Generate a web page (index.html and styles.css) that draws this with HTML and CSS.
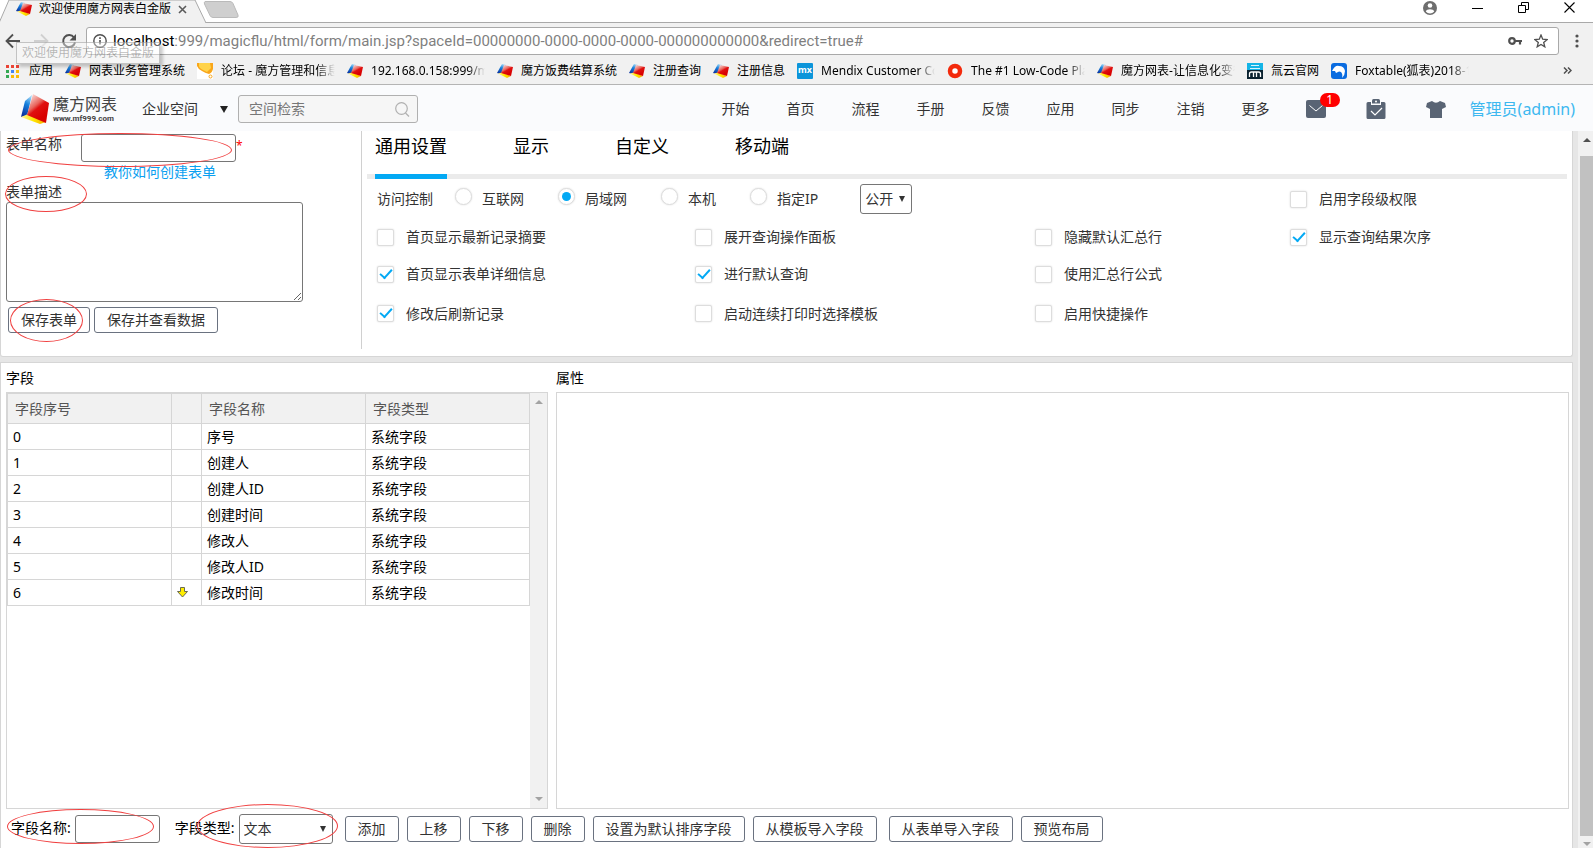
FILE: index.html
```html
<!DOCTYPE html>
<html lang="zh-CN">
<head>
    <meta charset="UTF-8">
    <meta name="viewport" content="width=device-width, initial-scale=1.0">
    <title>欢迎使用魔方网表白金版</title>
    <link rel="stylesheet" href="styles.css">
</head>
<body>

    <!-- logo 图形 -->
    <svg class="defs" width="0" height="0" aria-hidden="true">
        <defs>
            <linearGradient id="g-red" x1="0.2" y1="0" x2="0.7" y2="0.8">
                <stop offset="0" stop-color="#fbe3e0"/>
                <stop offset="0.45" stop-color="#e8645c"/>
                <stop offset="0.6" stop-color="#e01010"/>
                <stop offset="1" stop-color="#d80000"/>
            </linearGradient>
            <linearGradient id="g-blue" x1="0.6" y1="0" x2="0.3" y2="1">
                <stop offset="0" stop-color="#9fd4f5"/>
                <stop offset="0.4" stop-color="#1580dc"/>
                <stop offset="1" stop-color="#0a2c9c"/>
            </linearGradient>
            <linearGradient id="g-yellow" x1="0" y1="0" x2="1" y2="0">
                <stop offset="0" stop-color="#fff3a0"/>
                <stop offset="0.5" stop-color="#ffe800"/>
                <stop offset="1" stop-color="#f7a600"/>
            </linearGradient>
            <symbol id="cube" viewBox="0 0 30 30">
                <path d="M12 1 7 22 1 23 5 7z" fill="url(#g-blue)"/>
                <path d="M1 23 8 20 26 28 20 30z" fill="url(#g-yellow)"/>
                <path d="M13 0 29 9 26 29 7 21z" fill="url(#g-red)"/>
            </symbol>
            <symbol id="cube-flat" viewBox="0 0 16 14">
                <path d="M5 0 9 1 4 10 0 9z" fill="url(#g-blue)"/>
                <path d="M1 9.500 5 8.500 14 12 10 14z" fill="url(#g-yellow)"/>
                <path d="M7 1 16 3 14 12 4 9z" fill="url(#g-red)"/>
            </symbol>
        </defs>
    </svg>

    <!-- 浏览器 -->
    <div class="browser">
        <div class="tab-strip">
            <svg class="tab-shape" width="240" height="24" viewBox="0 0 240 24">
                <path d="M-1 23 9 0H195L206 23" fill="#f1f1f1" stroke="#a9a9a9"/>
                <path d="M205 1.500H230Q232 1.500 233 3.500L238 15Q239 17.500 236 17.500H213Q211 17.500 210 15.500L204.500 4Q204 1.500 205 1.500z" fill="#cfcfcf" stroke="#bababa"/>
            </svg>
            <div class="tab">
                <svg width="16" height="14"><use href="#cube-flat"/></svg>
                <span class="tab-title">欢迎使用魔方网表白金版</span>
                <button class="icon-btn" aria-label="关闭标签">
                    <svg width="9" height="9" viewBox="0 0 9 9"><path d="M1 1l7 7M8 1L1 8" stroke="#5a5a5a" stroke-width="1.600"/></svg>
                </button>
            </div>
            <div class="window-btns">
                <button class="icon-btn" aria-label="用户">
                    <svg width="14" height="14" viewBox="0 0 14 14"><circle cx="7" cy="7" r="7" fill="#6e6e6e"/><circle cx="7" cy="4.500" r="2.300" fill="#fff"/><path d="M2.800 10.500C3.500 7.500 10.500 7.500 11.200 10.500 9 13 5 13 2.800 10.500z" fill="#fff"/></svg>
                </button>
                <button class="icon-btn" aria-label="最小化">
                    <svg width="11" height="11" viewBox="0 0 11 11"><path d="M0 6.500h11" stroke="#000"/></svg>
                </button>
                <button class="icon-btn" aria-label="还原">
                    <svg width="11" height="11" viewBox="0 0 11 11" fill="none" stroke="#000"><path d="M.5 3.500h7v7h-7zM3.500 3.500v-3h7v7h-3"/></svg>
                </button>
                <button class="icon-btn" aria-label="关闭">
                    <svg width="11" height="11" viewBox="0 0 11 11"><path d="M.5.5l10 10M10.500.5l-10 10" stroke="#000" stroke-width="1.100"/></svg>
                </button>
            </div>
        </div>

        <div class="toolbar">
            <button class="icon-btn" aria-label="后退">
                <svg width="16" height="16" viewBox="0 0 16 16" fill="none" stroke="#505050" stroke-width="1.800"><path d="M15 8H2M8 1.500 1.500 8 8 14.500"/></svg>
            </button>
            <button class="icon-btn" aria-label="前进">
                <svg width="16" height="16" viewBox="0 0 16 16" fill="none" stroke="#d0d0d0" stroke-width="1.800"><path d="M1 8h13M8 1.500 14.500 8 8 14.500"/></svg>
            </button>
            <button class="icon-btn" aria-label="刷新">
                <svg width="16" height="16" viewBox="0 0 16 16"><path d="M13 4.500A6 6 0 1 0 14 9.500" fill="none" stroke="#505050" stroke-width="2"/><path d="M15 1v6.500H8.500z" fill="#505050"/></svg>
            </button>
            <div class="address">
                <svg width="14" height="14" viewBox="0 0 14 14"><circle cx="7" cy="7" r="6.200" fill="none" stroke="#505050" stroke-width="1.400"/><path d="M7 6v4.500M7 3.300v1.600" stroke="#505050" stroke-width="1.600"/></svg>
                <label class="address-host" for="url">localhost</label>
                <input class="address-path" id="url" type="text" value=":999/magicflu/html/form/main.jsp?spaceId=00000000-0000-0000-0000-000000000000&amp;redirect=true#">
                <svg width="14" height="10" viewBox="0 0 14 10"><circle cx="4" cy="5" r="2.800" fill="none" stroke="#505050" stroke-width="2.200"/><path d="M7 5h7M12 5v3.500" stroke="#505050" stroke-width="2.200"/></svg>
                <svg width="14" height="14" viewBox="0 0 14 14"><path d="M7 1l1.700 4.200 4.500.3-3.500 2.900 1.100 4.400L7 10.400l-3.800 2.400 1.100-4.400L.8 5.500l4.500-.3z" fill="none" stroke="#505050" stroke-width="1.300"/></svg>
            </div>
            <button class="icon-btn" aria-label="菜单">
                <svg width="4" height="14" viewBox="0 0 4 14" fill="#505050"><circle cx="2" cy="2" r="1.600"/><circle cx="2" cy="7" r="1.600"/><circle cx="2" cy="12" r="1.600"/></svg>
            </button>
            <div class="tooltip">欢迎使用魔方网表白金版</div>
        </div>

        <nav class="bookmarks">
            <a class="bookmark" href="#">
                <svg width="16" height="16" viewBox="0 0 16 16"><path d="M1 2h3v3h-3zM6 2h3v3h-3zM11 2h3v3h-3z" fill="#ea4335"/><path d="M1 7h3v3h-3z" fill="#34a853"/><path d="M6 7h3v3h-3z" fill="#4285f4"/><path d="M11 7h3v3h-3zM11 12h3v3h-3zM6 12h3v3h-3z" fill="#fbbc05"/><path d="M1 12h3v3h-3z" fill="#34a853"/></svg>
                <span>应用</span>
            </a>
            <a class="bookmark" href="#"><svg width="16" height="14"><use href="#cube-flat"/></svg><span>网表业务管理系统</span></a>
            <a class="bookmark" href="#">
                <svg width="16" height="16" viewBox="0 0 16 16"><path d="M0 0h16v16H0z" fill="#fff"/><path d="M0 0h16v6q-1 4-4 5-4-1-7-3Q1 6 0 3z" fill="#f9a61a"/><path d="M2 0h11l1 5-4 4-4-2q-4-2-4-4z" fill="#ffd34a"/><circle cx="13.500" cy="13.500" r="1.500" fill="none" stroke="#f9a61a"/></svg>
                <span class="fade">论坛 - 魔方管理和信息化</span>
            </a>
            <a class="bookmark" href="#"><svg width="16" height="14"><use href="#cube-flat"/></svg><span class="fade">192.168.0.158:999/magicflu</span></a>
            <a class="bookmark" href="#"><svg width="16" height="14"><use href="#cube-flat"/></svg><span>魔方饭费结算系统</span></a>
            <a class="bookmark" href="#"><svg width="16" height="14"><use href="#cube-flat"/></svg><span>注册查询</span></a>
            <a class="bookmark" href="#"><svg width="16" height="14"><use href="#cube-flat"/></svg><span>注册信息</span></a>
            <a class="bookmark" href="#"><b class="mx">mx</b><span class="fade">Mendix Customer Community</span></a>
            <a class="bookmark" href="#">
                <svg width="16" height="16" viewBox="0 0 16 16"><circle cx="8" cy="8" r="5" fill="#fff" stroke="#f32a0c" stroke-width="4.500"/></svg>
                <span class="fade">The #1 Low-Code Platform</span>
            </a>
            <a class="bookmark" href="#"><svg width="16" height="14"><use href="#cube-flat"/></svg><span class="fade">魔方网表-让信息化变得简单</span></a>
            <a class="bookmark" href="#">
                <svg width="16" height="16" viewBox="0 0 16 16"><path d="M0 0h16v8H0z" fill="#14b4e6"/><path d="M0 7h16v9H0z" fill="#0b2331"/><path d="M4 2.500h8M3 5.500h10" stroke="#d8f3fc"/><path d="M2.500 14v-3q0-2 2-2h7q2 0 2 2v3M6.500 14V9M9.500 14V9" stroke="#fff" stroke-width="1.300" fill="none"/></svg>
                <span>氚云官网</span>
            </a>
            <a class="bookmark" href="#">
                <svg width="16" height="16" viewBox="0 0 16 16"><rect width="16" height="16" rx="3" fill="#0a6ce0"/><path d="M1 8Q4 2 8 3q5 0 6 5 0 4-3 7 1-4-1-6-2-1-3 0L5 10 4 8z" fill="#fff"/></svg>
                <span class="fade">Foxtable(狐表)2018-12版</span>
            </a>
            <button class="icon-btn more" aria-label="更多书签">
                <svg width="9" height="7" viewBox="0 0 9 7" fill="none" stroke="#505050" stroke-width="1.500"><path d="M1 .5 4 3.500 1 6.500M5 .5 8 3.500 5 6.500"/></svg>
            </button>
        </nav>
    </div>

    <!-- 页头 -->
    <header class="header">
        <a class="logo" href="#">
            <svg width="30" height="30"><use href="#cube"/></svg>
            <span class="logo-text">
                <span class="logo-name">魔方网表</span>
                <span class="logo-url">www.mf999.com</span>
            </span>
        </a>
        <button class="space-btn">企业空间 <i class="caret"></i></button>
        <div class="search">
            <input type="text" placeholder="空间检索" aria-label="空间检索">
            <svg width="15" height="15" viewBox="0 0 15 15" fill="none" stroke="#b0b0b0" stroke-width="1.200"><circle cx="6.500" cy="6.500" r="5.800"/><path d="M10.500 11l3.500 3.500"/></svg>
        </div>
        <nav class="menu">
            <a href="#">开始</a>
            <a href="#">首页</a>
            <a href="#">流程</a>
            <a href="#">手册</a>
            <a href="#">反馈</a>
            <a href="#">应用</a>
            <a href="#">同步</a>
            <a href="#">注销</a>
            <a href="#">更多</a>
        </nav>
        <div class="tools">
            <button class="icon-btn mail" aria-label="消息">
                <svg width="20" height="18" viewBox="0 0 20 18"><rect width="20" height="18" rx="2" fill="#596474"/><path d="M3.500 5.500 10 11l6.500-5.500" fill="none" stroke="#fff"/></svg>
                <span class="badge">1</span>
            </button>
            <button class="icon-btn" aria-label="任务">
                <svg width="20" height="20" viewBox="0 0 20 20"><path d="M2 3h3v3h10V3h3q1.500 0 1.500 1.500v14Q19.500 20 18 20H2Q.5 20 .5 18.500v-14Q.5 3 2 3z" fill="#596474"/><path d="M6 1.500Q6 0 7.500 0h5Q14 0 14 1.500V4.500H6z" fill="#596474"/><circle cx="10" cy="2.500" r="1" fill="#fff"/><path d="M5 12l4 4 7-7" fill="none" stroke="#fff" stroke-width="1.200"/></svg>
            </button>
            <button class="icon-btn" aria-label="皮肤">
                <svg width="20" height="17" viewBox="0 0 20 17"><path d="M6 0Q10 3.500 14 0l5 2 1 4-4 2v9H4V8L0 6l1-4z" fill="#596474"/></svg>
            </button>
        </div>
        <a class="user" href="#">管理员(admin)</a>
    </header>

    <!-- 主体 -->
    <div class="page">
        <main class="content">
            <section class="panel settings">
                <div class="form-info">
                    <div class="name-row">
                        <label for="form-name">表单名称</label>
                        <input class="text-input" id="form-name" type="text">
                        <span class="required">*</span>
                        <i class="mark mark-name"></i>
                    </div>
                    <a class="help-link" href="#">教你如何创建表单</a>
                    <div class="desc-row">
                        <label for="form-desc">表单描述</label>
                        <i class="mark mark-desc"></i>
                    </div>
                    <textarea id="form-desc"></textarea>
                    <div class="save-row">
                        <button class="btn">保存表单</button>
                        <button class="btn">保存并查看数据</button>
                        <i class="mark mark-save"></i>
                    </div>
                </div>

                <div class="form-options">
                    <div class="tabs">
                        <button class="active">通用设置</button>
                        <button>显示</button>
                        <button>自定义</button>
                        <button>移动端</button>
                    </div>
                    <div class="options">
                        <div class="access">
                            <span>访问控制</span>
                            <label><input type="radio" name="access">互联网</label>
                            <label><input type="radio" name="access" checked>局域网</label>
                            <label><input type="radio" name="access">本机</label>
                            <label><input type="radio" name="access">指定IP</label>
                            <span class="select open-select">
                                <select aria-label="公开范围"><option>公开</option></select>
                            </span>
                        </div>
                        <label><input type="checkbox">启用字段级权限</label>

                        <label><input type="checkbox">首页显示最新记录摘要</label>
                        <label><input type="checkbox">展开查询操作面板</label>
                        <label><input type="checkbox">隐藏默认汇总行</label>
                        <label><input type="checkbox" checked>显示查询结果次序</label>

                        <label><input type="checkbox" checked>首页显示表单详细信息</label>
                        <label><input type="checkbox" checked>进行默认查询</label>
                        <label class="wide"><input type="checkbox">使用汇总行公式</label>

                        <label><input type="checkbox" checked>修改后刷新记录</label>
                        <label><input type="checkbox">启动连续打印时选择模板</label>
                        <label class="wide"><input type="checkbox">启用快捷操作</label>
                    </div>
                </div>
            </section>

            <section class="panel fields">
                <div class="columns">
                    <div class="field-col">
                        <h2>字段</h2>
                        <div class="box field-box">
                            <table>
                                <colgroup><col><col class="col-arrow"><col><col></colgroup>
                                <thead>
                                    <tr><th>字段序号</th><th></th><th>字段名称</th><th>字段类型</th></tr>
                                </thead>
                                <tbody>
                                    <tr><td>0</td><td></td><td>序号</td><td>系统字段</td></tr>
                                    <tr><td>1</td><td></td><td>创建人</td><td>系统字段</td></tr>
                                    <tr><td>2</td><td></td><td>创建人ID</td><td>系统字段</td></tr>
                                    <tr><td>3</td><td></td><td>创建时间</td><td>系统字段</td></tr>
                                    <tr><td>4</td><td></td><td>修改人</td><td>系统字段</td></tr>
                                    <tr><td>5</td><td></td><td>修改人ID</td><td>系统字段</td></tr>
                                    <tr>
                                        <td>6</td>
                                        <td><svg width="11" height="11" viewBox="0 0 11 11"><path d="M3.500.5h4v4h3l-5 5.500-5-5.500h3z" fill="#ffee00" stroke="#6b6b50"/></svg></td>
                                        <td>修改时间</td>
                                        <td>系统字段</td>
                                    </tr>
                                </tbody>
                            </table>
                            <div class="scrollbar disabled"><i class="arrow up"></i><i class="arrow down"></i></div>
                        </div>
                    </div>
                    <div class="prop-col">
                        <h2>属性</h2>
                        <div class="box"></div>
                    </div>
                </div>

                <div class="actions">
                    <div class="field-name">
                        <label for="field-name">字段名称:</label>
                        <input class="text-input" id="field-name" type="text">
                        <i class="mark mark-field"></i>
                    </div>
                    <div class="field-type">
                        <label for="field-type">字段类型:</label>
                        <span class="select type-select">
                            <select id="field-type"><option>文本</option></select>
                        </span>
                        <i class="mark mark-type"></i>
                    </div>
                    <button class="btn">添加</button>
                    <button class="btn">上移</button>
                    <button class="btn">下移</button>
                    <button class="btn">删除</button>
                    <button class="btn">设置为默认排序字段</button>
                    <button class="btn">从模板导入字段</button>
                    <button class="btn btn-form">从表单导入字段</button>
                    <button class="btn">预览布局</button>
                </div>
            </section>
        </main>
        <div class="scrollbar"><i class="arrow up"></i><div class="thumb"></div><i class="arrow down"></i></div>
    </div>

</body>
</html>
```
FILE: styles.css
```css
* {
    box-sizing: border-box;
}

body {
    margin: 0;
    height: 100vh;
    display: flex;
    flex-direction: column;
    overflow: hidden;
    font-family: "Noto Sans", "Noto Sans CJK SC", sans-serif;
    font-size: 14px;
    line-height: 20px;
    color: #333;
    background-color: #e6e6e6;
}

button, input, select, textarea {
    font: inherit;
    color: inherit;
    margin: 0;
}

a {
    color: inherit;
    text-decoration: none;
}

svg {
    display: block;
    flex: none;
}

.defs {
    position: absolute;
}

.icon-btn {
    flex: none;
    display: flex;
    padding: 0;
    border: none;
    background: none;
}

/* 浏览器 */
.browser {
    flex: none;
    background-color: #f1f1f1;
    border-bottom: 1px solid #b4b4b4;
    font-size: 12px;
    color: #000;
}

.tab-strip {
    position: relative;
    height: 23px;
    display: flex;
    justify-content: space-between;
    padding: 0 18px 0 16px;
    background-color: #fff;
    border-bottom: 1px solid #a9a9a9;
}

.tab-shape {
    position: absolute;
    left: 0;
    top: 0;
}

.tab {
    position: relative;
    display: flex;
    align-items: center;
    gap: 7px;
    height: 18px;
}

.tab-title {
    line-height: 18px;
}

.window-btns {
    display: flex;
    align-items: center;
    gap: 35px;
    height: 15px;
}

.toolbar {
    position: relative;
    display: flex;
    align-items: center;
    gap: 12px;
    padding: 4px 14px 4px 5px;
}

.address {
    flex: 1;
    min-width: 0;
    display: flex;
    align-items: center;
    gap: 12px;
    height: 28px;
    padding: 0 10px 0 6px;
    margin: 0 4px 0 -3px;
    background-color: #fff;
    border: 1px solid #a9a9a9;
    border-radius: 3px;
    font-family: Roboto, "Noto Sans", sans-serif;
    font-size: 15px;
}

.address-host {
    margin-left: -6px;
}

.address-path {
    flex: 1;
    min-width: 0;
    margin-left: -12px;
    padding: 0;
    border: none;
    outline: none;
    color: #7f7f7f;
    background: none;
}

.tooltip {
    position: absolute;
    left: 16px;
    top: 19px;
    padding: 0 5px;
    border: 1px solid rgba(120, 120, 120, 0.4);
    background-color: rgba(255, 255, 255, 0.4);
    box-shadow: 3px 3px 3px rgba(0, 0, 0, 0.2);
    color: rgba(80, 80, 80, 0.4);
}

.bookmarks {
    display: flex;
    align-items: center;
    gap: 12px;
    height: 25px;
    padding: 0 21px 2px 5px;
}

.bookmark {
    flex: none;
    display: flex;
    align-items: center;
    gap: 8px;
    white-space: nowrap;
}

.fade {
    width: 114px;
    overflow: hidden;
    -webkit-mask-image: linear-gradient(to right, #000 85%, transparent);
    mask-image: linear-gradient(to right, #000 85%, transparent);
}

.mx {
    width: 16px;
    height: 16px;
    border-radius: 1px;
    background-color: #0c95da;
    color: #fff;
    font-size: 9px;
    line-height: 14px;
    text-align: center;
}

.more {
    margin-left: auto;
}

/* 页头 */
.header {
    flex: none;
    display: flex;
    align-items: center;
    height: 46px;
    padding: 2px 18px 0 20px;
    background-color: #fafbfd;
    white-space: nowrap;
}

.logo {
    display: flex;
    gap: 3px;
    color: #444;
}

.logo-text {
    display: flex;
    flex-direction: column;
    width: 63px;
}

.logo-name {
    font-size: 16px;
}

.logo-url {
    font-family: Roboto, sans-serif;
    font-size: 8px;
    font-weight: bold;
    line-height: 10px;
}

.space-btn {
    display: flex;
    align-items: center;
    gap: 22px;
    margin-left: 26px;
    padding: 0;
    border: none;
    background: none;
}

.caret {
    border: 4px solid transparent;
    border-top: 7px solid #222;
    border-bottom: none;
}

.search {
    display: flex;
    align-items: center;
    width: 180px;
    height: 28px;
    margin-left: 10px;
    padding: 0 7px 0 10px;
    border: 1px solid #b0b0b0;
    border-radius: 3px;
    background-color: #f6f6f6;
}

.search input {
    flex: 1;
    min-width: 0;
    padding: 0;
    border: none;
    outline: none;
    background: none;
}

.search input::placeholder {
    color: #777;
}

.menu {
    display: flex;
    gap: 37px;
    margin-left: auto;
}

.tools {
    display: flex;
    align-items: center;
    gap: 40px;
    margin: 0 24px 0 36px;
}

.mail {
    position: relative;
}

.badge {
    position: absolute;
    left: 14px;
    top: -7px;
    width: 20px;
    height: 14px;
    border-radius: 7px;
    background-color: #f00;
    color: #fff;
    font-size: 12px;
    line-height: 14px;
}

.user {
    font-size: 16px;
    color: #3db8f0;
}

/* 主体 */
.page {
    flex: 1;
    min-height: 0;
    display: flex;
}

.content {
    flex: 1;
    min-width: 0;
    display: flex;
    flex-direction: column;
    gap: 5px;
    padding-right: 5px;
}

.panel {
    background-color: #fff;
    border: 1px solid #d6d6d6;
}

.settings {
    display: flex;
    padding: 0 5px 7px;
    border-top: none;
    border-radius: 0 0 3px 3px;
}

.form-info {
    flex: none;
    width: 356px;
    height: 218px;
    padding-top: 3px;
    border-right: 1px solid #d0d0d0;
}

.name-row {
    position: relative;
    display: flex;
}

.name-row label {
    width: 75px;
}

.text-input {
    height: 28px;
    padding: 0 5px;
    border: 1px solid #767676;
    border-radius: 3px;
    outline: none;
}

#form-name {
    width: 155px;
}

.required {
    color: #f00;
    font-size: 12px;
    line-height: 24px;
}

.help-link {
    display: block;
    margin-left: 98px;
    color: #0aa0f0;
}

.desc-row {
    position: relative;
}

textarea {
    display: block;
    width: 297px;
    height: 100px;
    border: 1px solid #767676;
    border-radius: 3px;
}

.save-row {
    position: relative;
    display: flex;
    gap: 4px;
    padding: 5px 2px;
}

.btn {
    flex: none;
    height: 26px;
    padding: 0 12px;
    border: 1px solid #6a7280;
    border-radius: 3px;
    background-color: #fff;
    white-space: nowrap;
}

/* 红色圈注 */
.mark {
    position: absolute;
    border: 1px solid #f04040;
    border-radius: 50%;
    pointer-events: none;
}

.mark-name {
    left: 2px;
    top: -1px;
    width: 224px;
    height: 34px;
}

.mark-desc {
    left: -1px;
    top: -6px;
    width: 82px;
    height: 36px;
}

.mark-save {
    left: 4px;
    top: -3px;
    width: 73px;
    height: 43px;
}

.mark-field {
    left: -4px;
    top: -6px;
    width: 147px;
    height: 35px;
}

.mark-type {
    left: 22px;
    top: -10px;
    width: 141px;
    height: 44px;
}

/* 选项 */
.form-options {
    flex: 1;
    min-width: 0;
    padding-left: 5px;
}

.tabs {
    display: flex;
    gap: 66px;
    height: 48px;
    padding-left: 8px;
    border-bottom: 5px solid #ebebeb;
}

.tabs button {
    height: 48px;
    padding: 0 0 14px;
    border: none;
    border-bottom: 5px solid transparent;
    background: none;
    color: #000;
    font-size: 18px;
}

.tabs .active {
    border-color: #03a9f4;
}

.options {
    display: grid;
    grid-template-columns: 318fr 340fr 255fr 277fr;
    grid-template-rows: 40px 36px 38px 41px;
    align-items: center;
    padding-left: 10px;
}

.access {
    grid-column: span 3;
    display: flex;
    align-items: center;
    gap: 34px;
}

.access span:first-child {
    margin-right: -12px;
}

.options label {
    display: flex;
    align-items: center;
    gap: 12px;
}

.options .access label {
    gap: 10px;
}

.options .wide {
    grid-column: span 2;
}

input[type="checkbox"],
input[type="radio"] {
    appearance: none;
    flex: none;
    display: flex;
    align-items: center;
    justify-content: center;
    width: 17px;
    height: 17px;
    border: 1px solid #ddd;
    border-radius: 2px;
    background-color: #fff;
    box-shadow: 0 0 2px rgba(0, 0, 0, 0.15);
}

input[type="radio"] {
    margin-bottom: 6px;
    border-radius: 50%;
}

input[type="radio"]:checked::after {
    content: "";
    width: 9px;
    height: 9px;
    border-radius: 50%;
    background-color: #03a9f4;
}

input[type="checkbox"]:checked::after {
    content: "";
    width: 10px;
    height: 5px;
    margin-bottom: 4px;
    border: solid #03a9f4;
    border-width: 0 0 2px 2px;
    transform: rotate(-48deg);
}

.select {
    position: relative;
    display: block;
}

.select select {
    appearance: none;
    width: 100%;
    height: 30px;
    padding: 0 4px;
    border: 1px solid #767676;
    border-radius: 3px;
    outline: none;
    background-color: #fff;
}

.select::after {
    content: "";
    position: absolute;
    right: 7px;
    top: 12px;
    border: 3px solid transparent;
    border-top: 6px solid #333;
    border-bottom: none;
    pointer-events: none;
}

.open-select {
    width: 52px;
    margin-left: 8px;
}

.type-select {
    width: 94px;
}

/* 字段 */
.fields {
    flex: 1;
    min-height: 0;
    display: flex;
    flex-direction: column;
    padding: 5px 3px 0 5px;
    border-bottom: none;
}

.columns {
    flex: 1;
    min-height: 0;
    display: flex;
    gap: 8px;
}

.field-col, .prop-col {
    display: flex;
    flex-direction: column;
}

.field-col {
    flex: none;
    width: 542px;
}

.prop-col {
    flex: 1;
    min-width: 0;
}

h2 {
    margin: 0;
    font-size: 14px;
    font-weight: normal;
    line-height: 20px;
    padding-bottom: 4px;
    color: #000;
}

.box {
    flex: 1;
    border: 1px solid #d6d6d6;
}

.field-box {
    display: flex;
    align-items: flex-start;
}

table {
    flex: 1;
    border-collapse: collapse;
    table-layout: fixed;
}

.col-arrow {
    width: 30px;
}

th, td {
    height: 26px;
    padding: 0 5px;
    border: 1px solid #d6d6d6;
    color: #000;
    text-align: left;
}

th {
    height: 30px;
    padding: 0 7px;
    background-color: #f1f1f1;
    color: #555;
    font-weight: normal;
}

.scrollbar {
    flex: none;
    align-self: stretch;
    display: flex;
    flex-direction: column;
    justify-content: space-between;
    align-items: center;
    width: 15px;
    padding: 7px 0 2px 2px;
    background-color: #f1f1f1;
}

.scrollbar.disabled {
    width: 17px;
    padding: 7px 0;
}

.thumb {
    flex: 1;
    width: 100%;
    margin: 14px 0 6px;
    background-color: #c1c1c1;
}

.arrow {
    border: 4px solid transparent;
}

.arrow.up {
    border-top: none;
    border-bottom-color: #505050;
}

.arrow.down {
    border-bottom: none;
    border-top-color: #a3a3a3;
}

.disabled .arrow.up {
    border-bottom-color: #a3a3a3;
}

.actions {
    flex: none;
    display: flex;
    align-items: center;
    gap: 8px;
    height: 39px;
    padding-left: 5px;
    white-space: nowrap;
}

.field-name, .field-type {
    position: relative;
    display: flex;
    align-items: center;
    gap: 4px;
    color: #000;
}

.field-name {
    margin-right: 7px;
}

.field-type {
    margin-right: 4px;
}

.field-name label, .field-type label {
    padding-bottom: 2px;
}

.field-type select {
    color: #333;
}

#field-name {
    width: 85px;
}

.btn-form {
    margin-left: 4px;
}
```
